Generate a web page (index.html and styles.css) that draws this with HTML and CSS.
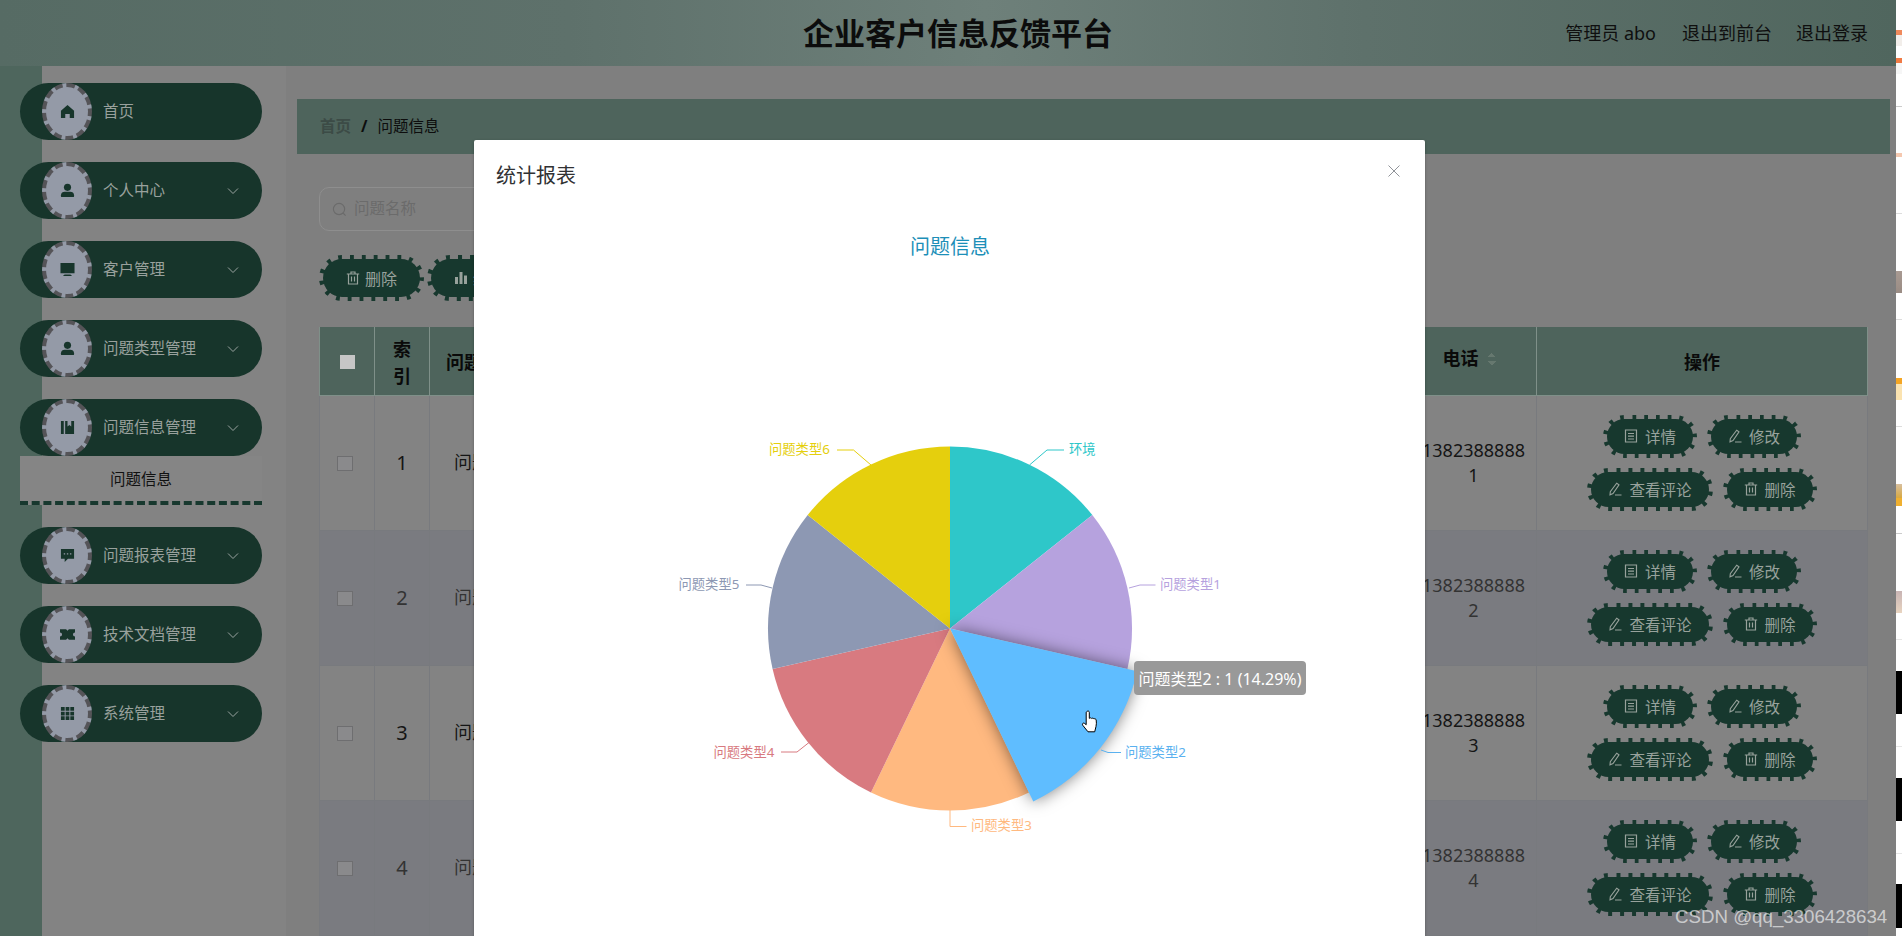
FILE: index.html
```html
<!DOCTYPE html>
<html lang="zh-CN">
<head>
  <meta charset="UTF-8">
  <meta name="viewport" content="width=device-width, initial-scale=1.0">
  <title>企业客户信息反馈平台</title>
  <link rel="stylesheet" href="styles.css">
</head>
<body>
  <svg class="iconDefs" aria-hidden="true">
    <symbol id="i-home" viewBox="0 0 16 16"><path d="M8 1 15 7.2V15h-4.6v-4.4H5.6V15H1V7.2Z"/></symbol>
    <symbol id="i-user" viewBox="0 0 16 16"><circle cx="8" cy="4.6" r="3.8"/><path d="M1 13c0-2.4 2-3.6 4-3.6h6c2 0 4 1.200 4 3.600v1a1 1 0 0 1-1 1H2a1 1 0 0 1-1-1Z"/></symbol>
    <symbol id="i-screen" viewBox="0 0 16 16"><path d="M.5 1h15v11H.5ZM5 13.200h6l1.500 1.300v.5h-9v-.5Z"/></symbol>
    <symbol id="i-book" viewBox="0 0 16 16"><path d="M1 1h3v14H1ZM5.500 1H8v6l2-1.800L12 7V1h3v14H5.500Z"/></symbol>
    <symbol id="i-chat" viewBox="0 0 16 16"><path fill-rule="evenodd" d="M1 1h14v10.500H8.500L5 15v-3.500H1ZM4 5.500v1.500h1.500V5.500Zm3.300 0v1.500h1.500V5.500Zm3.300 0v1.500h1.500V5.500Z"/></symbol>
    <symbol id="i-ticket" viewBox="0 0 16 16"><path d="M0 2.500h6.500L8 4l1.500-1.500H16v3.300a2.200 2.200 0 0 0 0 4.400v3.300H9.500L8 12l-1.500 1.500H0v-3.300a2.200 2.200 0 0 0 0-4.400Z"/></symbol>
    <symbol id="i-grid" viewBox="0 0 16 16"><path d="M1 1h4v4H1ZM6 1h4v4H6ZM11 1h4v4h-4ZM1 6h4v4H1ZM6 6h4v4H6ZM11 6h4v4h-4ZM1 11h4v4H1ZM6 11h4v4H6ZM11 11h4v4h-4Z"/></symbol>
    <symbol id="i-down" viewBox="0 0 12 8"><path d="M1 1.500 6 6.500 11 1.500" fill="none" stroke="currentColor" stroke-width="1"/></symbol>
    <symbol id="i-detail" viewBox="0 0 14 14"><path d="M1.500 1h11v12h-11ZM4 4.500h6M4 7.200h6M4 10h6" fill="none" stroke="currentColor" stroke-width="1.200"/></symbol>
    <symbol id="i-edit" viewBox="0 0 14 14"><path d="M8.700 1.200 11 2.800 5 11.600 2 12.800 2.300 9.600ZM7 13h6.500" fill="none" stroke="currentColor" stroke-width="1.100"/></symbol>
    <symbol id="i-trash" viewBox="0 0 14 14"><path d="M0.800 3h12.400M5 3V1h4v2M2.500 3v10h9V3M5.500 5.500v5M8.500 5.500v5" fill="none" stroke="currentColor" stroke-width="1.200"/></symbol>
    <symbol id="i-bars" viewBox="0 0 14 14"><path d="M1 6h3v7H1ZM5.500 1h3v12h-3ZM10 4.500h3V13h-3Z" fill="currentColor"/></symbol>
  </svg>

  <div class="page">
    <div class="app">
      <header class="topbar">
        <div class="topSide"></div>
        <h1 class="siteTitle">企业客户信息反馈平台</h1>
        <div class="topLinks">
          <span>管理员 abo</span>
          <span>退出到前台</span>
          <span>退出登录</span>
        </div>
      </header>

      <div class="layout">
        <aside class="sidebar">
          <div class="menuItem">
            <span class="gear"><svg class="gearIcon"><use href="#i-home"/></svg></span>
            <span class="menuText">首页</span>
          </div>
          <div class="menuItem">
            <span class="gear"><svg class="gearIcon"><use href="#i-user"/></svg></span>
            <span class="menuText">个人中心</span>
            <svg class="chevron"><use href="#i-down"/></svg>
          </div>
          <div class="menuItem">
            <span class="gear"><svg class="gearIcon"><use href="#i-screen"/></svg></span>
            <span class="menuText">客户管理</span>
            <svg class="chevron"><use href="#i-down"/></svg>
          </div>
          <div class="menuItem">
            <span class="gear"><svg class="gearIcon"><use href="#i-user"/></svg></span>
            <span class="menuText">问题类型管理</span>
            <svg class="chevron"><use href="#i-down"/></svg>
          </div>
          <div class="menuItem open">
            <span class="gear"><svg class="gearIcon"><use href="#i-book"/></svg></span>
            <span class="menuText">问题信息管理</span>
            <svg class="chevron"><use href="#i-down"/></svg>
          </div>
          <div class="subItem">问题信息</div>
          <div class="menuItem">
            <span class="gear"><svg class="gearIcon"><use href="#i-chat"/></svg></span>
            <span class="menuText">问题报表管理</span>
            <svg class="chevron"><use href="#i-down"/></svg>
          </div>
          <div class="menuItem">
            <span class="gear"><svg class="gearIcon"><use href="#i-ticket"/></svg></span>
            <span class="menuText">技术文档管理</span>
            <svg class="chevron"><use href="#i-down"/></svg>
          </div>
          <div class="menuItem">
            <span class="gear"><svg class="gearIcon"><use href="#i-grid"/></svg></span>
            <span class="menuText">系统管理</span>
            <svg class="chevron"><use href="#i-down"/></svg>
          </div>
        </aside>

        <main class="main">
          <div class="crumbs">
            <span class="crumbHome">首页</span>
            <span class="crumbSep">/</span>
            <span>问题信息</span>
          </div>

          <div class="content">
            <div class="searchBox">
              <svg class="searchIcon" viewBox="0 0 16 16"><circle cx="7.500" cy="7.500" r="6"/><path d="M12 12l2.500 2.500"/></svg>
              <span class="searchHint">问题名称</span>
            </div>

            <div class="toolbar">
              <button class="btn btnBig"><svg class="btnIcon"><use href="#i-trash"/></svg>删除</button>
              <button class="btn btnBig"><svg class="btnIcon"><use href="#i-bars"/></svg>统计报表</button>
            </div>

            <table class="grid">
              <colgroup>
                <col class="colCheck"><col class="colIndex"><col class="colName"><col class="colPhone"><col class="colOps">
              </colgroup>
              <thead>
                <tr>
                  <th><span class="checkHead"></span></th>
                  <th>索引</th>
                  <th class="nameHead">问题名称</th>
                  <th><span class="sortHead">电话<span class="carets"></span></span></th>
                  <th>操作</th>
                </tr>
              </thead>
              <tbody>
                <tr>
                  <td><span class="check"></span></td>
                  <td class="num">1</td>
                  <td class="nameCell">问题1</td>
                  <td class="phone">13823888881</td>
                  <td>
                    <div class="ops">
                      <button class="btn"><svg class="btnIcon"><use href="#i-detail"/></svg>详情</button>
                      <button class="btn"><svg class="btnIcon"><use href="#i-edit"/></svg>修改</button>
                    </div>
                    <div class="ops">
                      <button class="btn"><svg class="btnIcon"><use href="#i-edit"/></svg>查看评论</button>
                      <button class="btn"><svg class="btnIcon"><use href="#i-trash"/></svg>删除</button>
                    </div>
                  </td>
                </tr>
                <tr>
                  <td><span class="check"></span></td>
                  <td class="num">2</td>
                  <td class="nameCell">问题2</td>
                  <td class="phone">13823888882</td>
                  <td>
                    <div class="ops">
                      <button class="btn"><svg class="btnIcon"><use href="#i-detail"/></svg>详情</button>
                      <button class="btn"><svg class="btnIcon"><use href="#i-edit"/></svg>修改</button>
                    </div>
                    <div class="ops">
                      <button class="btn"><svg class="btnIcon"><use href="#i-edit"/></svg>查看评论</button>
                      <button class="btn"><svg class="btnIcon"><use href="#i-trash"/></svg>删除</button>
                    </div>
                  </td>
                </tr>
                <tr>
                  <td><span class="check"></span></td>
                  <td class="num">3</td>
                  <td class="nameCell">问题3</td>
                  <td class="phone">13823888883</td>
                  <td>
                    <div class="ops">
                      <button class="btn"><svg class="btnIcon"><use href="#i-detail"/></svg>详情</button>
                      <button class="btn"><svg class="btnIcon"><use href="#i-edit"/></svg>修改</button>
                    </div>
                    <div class="ops">
                      <button class="btn"><svg class="btnIcon"><use href="#i-edit"/></svg>查看评论</button>
                      <button class="btn"><svg class="btnIcon"><use href="#i-trash"/></svg>删除</button>
                    </div>
                  </td>
                </tr>
                <tr>
                  <td><span class="check"></span></td>
                  <td class="num">4</td>
                  <td class="nameCell">问题4</td>
                  <td class="phone">13823888884</td>
                  <td>
                    <div class="ops">
                      <button class="btn"><svg class="btnIcon"><use href="#i-detail"/></svg>详情</button>
                      <button class="btn"><svg class="btnIcon"><use href="#i-edit"/></svg>修改</button>
                    </div>
                    <div class="ops">
                      <button class="btn"><svg class="btnIcon"><use href="#i-edit"/></svg>查看评论</button>
                      <button class="btn"><svg class="btnIcon"><use href="#i-trash"/></svg>删除</button>
                    </div>
                  </td>
                </tr>
              </tbody>
            </table>
          </div>
        </main>
      </div>
    </div>
    <div class="edgePeek"></div>
  </div>

  <!--dialog-->
  <div class="dialog">
    <div class="dialogHead">
      <span class="dialogTitle">统计报表</span>
      <svg class="dialogClose" viewBox="0 0 12 12"><path d="M.5.500l11 11M11.500.500l-11 11"/></svg>
    </div>

    <!-- viewBox uses page coordinates so the slices are easy to check -->
    <svg class="chart" viewBox="474 210 951 726">
      <text class="chartTitle" x="950" y="254" text-anchor="middle">问题信息</text>

      <path d="M950 628.500V446.500A182 182 0 0 1 1092.300 515Z" fill="#2ec7c9"/>
      <path d="M950 628.500L1092.300 515A182 182 0 0 1 1127.400 669Z" fill="#b6a2de"/>
      <path d="M950 628.500L1029 792.500A182 182 0 0 1 871 792.500Z" fill="#ffb980"/>
      <path d="M950 628.500L871 792.500A182 182 0 0 1 772.600 669Z" fill="#d87a80"/>
      <path d="M950 628.500L772.600 669A182 182 0 0 1 807.700 515Z" fill="#8d98b3"/>
      <path d="M950 628.500L807.700 515A182 182 0 0 1 950 446.500Z" fill="#e5cf0d"/>
      <path class="sliceHot" d="M950 628.500L1137.200 671.200A192 192 0 0 1 1033.300 801.500Z" fill="#5fbdff"/>

      <g class="leader">
        <path d="M1029.500 465 1047 450H1064" stroke="#2ec7c9"/>
        <path d="M1129 588 1140 585H1155.500" stroke="#b6a2de"/>
        <path d="M1101 750 1108 752.500H1121" stroke="#5ab1ef"/>
        <path d="M950 810V826.500H966.500" stroke="#ffb980"/>
        <path d="M809 742.500 797 752H781" stroke="#d87a80"/>
        <path d="M772 588 761 585H746" stroke="#8d98b3"/>
        <path d="M871 465 853.500 450H837" stroke="#e5cf0d"/>
      </g>
      <g class="sliceLabel">
        <text x="1069" y="454" fill="#2ec7c9">环境</text>
        <text x="1160" y="588.500" fill="#b6a2de">问题类型1</text>
        <text x="1125" y="756.500" fill="#5ab1ef">问题类型2</text>
        <text x="971" y="830" fill="#ffb980">问题类型3</text>
        <text x="713.500" y="756.500" fill="#d87a80">问题类型4</text>
        <text x="678.500" y="588.500" fill="#8d98b3">问题类型5</text>
        <text x="769" y="454" fill="#e5cf0d">问题类型6</text>
      </g>
    </svg>

    <div class="tooltip">问题类型2 : 1 (14.29%)</div>

    <svg class="handCursor" viewBox="0 0 18 24">
      <path d="M6 1.500c.9-.9 2.300-.4 2.300.9v6l.2-.1c.5-.7 1.800-.6 2.200.2.600-.6 1.800-.4 2.200.4.800-.5 2.100 0 2.300 1.100.3 2 .3 4.500-.2 6.500l-1.300 5.300H7l-5.300-6.600c-.9-1.200.5-2.800 1.800-1.800l1.700 1.300V2.500c0-.4.200-.7.800-1Z"/>
    </svg>
  </div>

  <div class="watermark">CSDN @qq_3306428634</div>
</body>
</html>
```

FILE: styles.css
```css
* {
  box-sizing: border-box;
}

html, body {
  margin: 0;
  padding: 0;
  height: 936px;
  overflow: hidden;
}

body {
  position: relative;
  font-family: "Noto Sans", "Noto Sans CJK SC", sans-serif;
  background-color: #fff;
  color: #111;
}

.iconDefs {
  display: none;
}

.page {
  display: flex;
  height: 936px;
}

.app {
  width: 1896px;
  flex-shrink: 0;
  display: flex;
  flex-direction: column;
}

/* another window peeks out behind the screenshot */
.edgePeek {
  flex: 1;
  background-image: linear-gradient(to bottom,
    #fff 30px, #f08a5c 30px, #f08a5c 35px, #f2eeea 35px, #f2eeea 46px, #fff 46px,
    #fff 58px, #f07a45 58px, #f07a45 63px, #f6f6f6 63px, #f6f6f6 74px, #fff 74px,
    #fff 106px, #ccc 106px, #ccc 107px, #fff 107px,
    #fff 153px, #f5c8b0 153px, #f5c8b0 157px, #fff 157px,
    #fff 213px, #ddd 213px, #ddd 214px, #fff 214px,
    #fff 271px, #a89a92 271px, #9a8c84 293px, #fff 293px,
    #fff 319px, #ddd 319px, #ddd 320px, #fff 320px,
    #fff 378px, #f5a623 378px, #f5a623 384px, #fbe3b0 384px, #fbe3b0 400px, #fff 400px,
    #fff 426px, #ddd 426px, #ddd 427px, #fff 427px,
    #fff 484px, #d8c0a0 484px, #d8a840 498px, #f0b030 498px, #f0b030 506px, #fff 506px,
    #fff 533px, #ccc 533px, #ccc 534px, #fff 534px,
    #fff 591px, #c8b4b4 591px, #e8d4c0 613px, #fff 613px,
    #fff 639px, #e6e6e6 639px, #e6e6e6 640px, #fff 640px,
    #fff 671px, #000 671px, #000 714px, #fff 714px,
    #fff 746px, #e6e6e6 746px, #e6e6e6 747px, #fff 747px,
    #fff 778px, #000 778px, #000 821px, #fff 821px,
    #fff 853px, #e6e6e6 853px, #e6e6e6 854px, #fff 854px,
    #fff 884px, #000 884px, #000 928px, #fff 928px);
}

.topbar {
  height: 66px;
  flex-shrink: 0;
  display: grid;
  grid-template-columns: 1fr auto 1fr;
  align-items: center;
  padding: 0 28px 0 48px;
  background-image: linear-gradient(to right, #566b64, #5e716b 30%, #6e807a 52%, #5e716b 72%, #50665e);
}

.siteTitle {
  margin: 0;
  font-size: 31px;
  font-weight: 700;
  line-height: 40px;
  color: #0c0c0c;
}

.topLinks {
  display: flex;
  justify-content: flex-end;
  gap: 26px;
  padding-bottom: 2px;
  font-size: 18px;
  color: #0f0f0f;
}

.topLinks span:last-child {
  margin-left: -2px;
}

.layout {
  flex: 1;
  display: flex;
  min-height: 0;
}

.sidebar {
  width: 286px;
  flex-shrink: 0;
  padding: 17px 24px 0 20px;
  background-image: linear-gradient(to right, #4e665d 42px, #838383 42px);
}

.menuItem {
  height: 57px;
  margin-bottom: 22px;
  display: flex;
  align-items: center;
  border-radius: 29px;
  background-color: #17352b;
  color: #99a19d;
  font-size: 15.500px;
}

.menuItem.open {
  margin-bottom: 0;
}

.gear {
  width: 50px;
  height: 57px;
  margin-left: 22px;
  flex-shrink: 0;
  display: flex;
  align-items: center;
  justify-content: center;
  border: 4px dashed #555458;
  border-radius: 50%;
  background-color: #949aa7;
}

.gearIcon {
  width: 15px;
  height: 15px;
  fill: #17352b;
}

.menuText {
  margin-left: 11px;
  padding-bottom: 2px;
}

.chevron {
  width: 12px;
  height: 8px;
  margin-left: auto;
  margin-right: 23px;
  color: #9aa3a0;
}

.subItem {
  height: 49px;
  margin-bottom: 22px;
  display: flex;
  align-items: center;
  justify-content: center;
  border-bottom: 4px dashed #17382e;
  background-color: #858585;
  color: #111;
  font-size: 15.500px;
}

.main {
  --surface: #7f7f7f;
  flex: 1;
  min-width: 0;
  background-color: var(--surface);
}

.crumbs {
  height: 55px;
  margin: 33px 6px 0 11px;
  padding: 0 0 2px 23px;
  display: flex;
  align-items: center;
  background-color: #4e645c;
  font-size: 15.500px;
  color: #0d0d0d;
}

.crumbHome {
  color: #3c4b46;
  font-weight: 700;
}

.crumbSep {
  margin: 0 10px;
  font-weight: 700;
}

.content {
  padding: 33px 0 0 33px;
}

.searchBox {
  width: 400px;
  height: 44px;
  padding-left: 12px;
  display: flex;
  align-items: center;
  gap: 7px;
  border: 1px solid #8e8e8e;
  border-radius: 10px;
  font-size: 15.500px;
  color: #6b6b6b;
}

.searchHint {
  padding-bottom: 4px;
}

.searchIcon {
  width: 15px;
  height: 15px;
  fill: none;
  stroke: #6b6b6b;
  stroke-width: 1.200;
}

.toolbar {
  margin-top: 24px;
  display: flex;
  gap: 3px;
}

/* the dashes take the colour of what is behind the button, so the fill shows as teeth */
.btn {
  height: 43px;
  padding: 0 17px;
  display: inline-flex;
  align-items: center;
  gap: 7px;
  border: 4px dashed var(--surface);
  border-radius: 22px;
  background-color: #17382e;
  color: #98a29c;
  font-family: inherit;
  font-size: 15.500px;
  white-space: nowrap;
}

.btnBig {
  height: 46px;
  padding: 0 23px;
  gap: 5px;
  font-size: 16px;
  border-radius: 23px;
}

.btnIcon {
  width: 14px;
  height: 14px;
  flex-shrink: 0;
}

.grid {
  width: 1549px;
  margin-top: 26px;
  table-layout: fixed;
  border-collapse: collapse;
}

.colCheck { width: 55px; }
.colIndex { width: 55px; }
.colPhone { width: 126px; }
.colOps { width: 331px; }

.grid th {
  height: 68px;
  padding: 4px 12px 0;
  background-color: #4e645c;
  border: 1px solid #7f9089;
  border-top: none;
  font-size: 18px;
  font-weight: 700;
  line-height: 27px;
  color: #0a0a0a;
  text-align: center;
}

.grid td {
  --surface: #838383;
  height: 135px;
  padding: 0;
  border: 1px solid #787a7e;
  background-color: var(--surface);
  font-size: 18px;
  line-height: 25px;
  color: #151515;
  text-align: center;
}

.grid tbody tr:nth-child(even) td {
  --surface: #7a7b80;
  color: #333;
}

.grid .nameHead {
  padding-left: 16px;
  text-align: left;
}

.grid .nameCell {
  padding-left: 24px;
  text-align: left;
}

.grid .num {
  font-size: 20px;
}

.grid .phone {
  padding: 0 6px;
  word-break: break-all;
}

.checkHead {
  display: inline-block;
  width: 15px;
  height: 14px;
  margin-bottom: 5px;
  background-color: #c6c6c6;
  vertical-align: middle;
}

.check {
  display: inline-block;
  width: 16px;
  height: 15px;
  margin: 0 5px 2px 0;
  border: 1px solid #6e6e70;
  background-color: #8a8a8c;
  vertical-align: middle;
}

.sortHead {
  display: inline-flex;
  align-items: center;
  gap: 9px;
  margin-right: 9px;
  padding-bottom: 8px;
}

.carets {
  width: 8px;
  height: 12px;
  background-image:
    linear-gradient(to bottom right, transparent 50%, #66786f 50%),
    linear-gradient(to bottom left, transparent 50%, #66786f 50%),
    linear-gradient(to top right, transparent 50%, #66786f 50%),
    linear-gradient(to top left, transparent 50%, #66786f 50%);
  background-size: 4px 4px;
  background-repeat: no-repeat;
  background-position: 0 0, 4px 0, 0 8px, 4px 8px;
}

.ops {
  display: flex;
  justify-content: center;
  gap: 10px;
}

.ops + .ops {
  margin-top: 10px;
}

.dialog {
  position: absolute;
  left: 474px;
  top: 140px;
  width: 951px;
  height: 796px;
  border-radius: 2px 2px 0 0;
  background-color: #fff;
  box-shadow: 0 1px 3px rgba(0, 0, 0, 0.3);
}

.dialogHead {
  height: 70px;
  padding: 20px 22px 0;
  display: flex;
  justify-content: space-between;
}

.dialogTitle {
  font-size: 20px;
  line-height: 31px;
  color: #303133;
}

.dialogClose {
  width: 12px;
  height: 12px;
  margin: 5px 3px 0 0;
  fill: none;
  stroke: #909399;
  stroke-width: 1;
}

.chart {
  display: block;
  width: 951px;
  height: 726px;
}

.chartTitle {
  font-size: 20px;
  fill: #1d8fb8;
}

.sliceHot {
  filter: drop-shadow(0 0 8px rgba(0, 0, 0, 0.5));
}

.leader path {
  fill: none;
  stroke-width: 1;
}

.sliceLabel {
  font-size: 13.300px;
}

.tooltip {
  position: absolute;
  left: 660px;
  top: 521px;
  width: 172px;
  height: 34px;
  display: flex;
  align-items: center;
  justify-content: center;
  border-radius: 4px;
  background-color: #999;
  color: #fff;
  font-size: 16px;
  white-space: nowrap;
}

.handCursor {
  position: absolute;
  left: 607px;
  top: 570px;
  width: 18px;
  height: 24px;
  fill: #fff;
  stroke: #000;
  stroke-width: 1;
}

.watermark {
  position: absolute;
  left: 1675px;
  top: 905px;
  font-family: "Liberation Sans", sans-serif;
  font-size: 18.700px;
  line-height: 24px;
  color: rgba(255, 255, 255, 0.62);
  white-space: nowrap;
}
```
